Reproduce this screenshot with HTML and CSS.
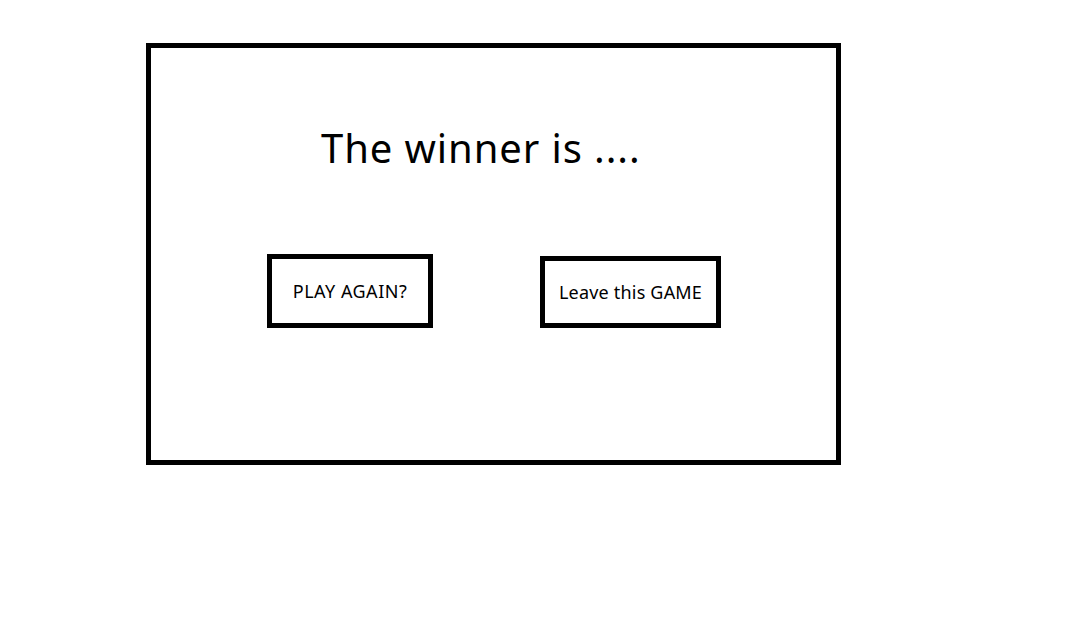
FILE: index.html
```html
<!DOCTYPE html>
<html>
<head>
<meta charset="utf-8">
<link rel="stylesheet" href="styles.css">
</head>
<body>
<div class="frame">
  <h1 class="title">The winner is ....</h1>
  <div class="actions">
    <div class="btn btn-play">PLAY AGAIN?</div>
    <div class="btn btn-leave">Leave this GAME</div>
  </div>
</div>
</body>
</html>
```
FILE: styles.css
```css
html, body {
  margin: 0;
  padding: 0;
  background: #fff;
}
body {
  font-family: "Noto Sans", "Open Sans", sans-serif;
  color: #000;
}
.frame {
  box-sizing: border-box;
  margin: 43px 0 0 146px;
  width: 695px;
  height: 422px;
  border: 5px solid #000;
  display: flex;
  flex-direction: column;
}
.title {
  margin: 73px 0 0 170px;
  font-size: 40px;
  font-weight: 400;
  line-height: 54px;
  letter-spacing: 0.9px;
}
.actions {
  display: flex;
  align-items: flex-end;
  margin: 0 0 0 116px;
  height: 153px;
}
.btn {
  box-sizing: border-box;
  border: 5px solid #000;
  display: flex;
  justify-content: center;
  font-size: 18px;
  line-height: normal;
}
.btn-play {
  width: 166px;
  height: 74px;
  padding-top: 20px;
  letter-spacing: 0.5px;
}
.btn-leave {
  width: 181px;
  height: 72px;
  margin-left: 107px;
  padding-top: 19px;
  letter-spacing: 0.2px;
}
```
